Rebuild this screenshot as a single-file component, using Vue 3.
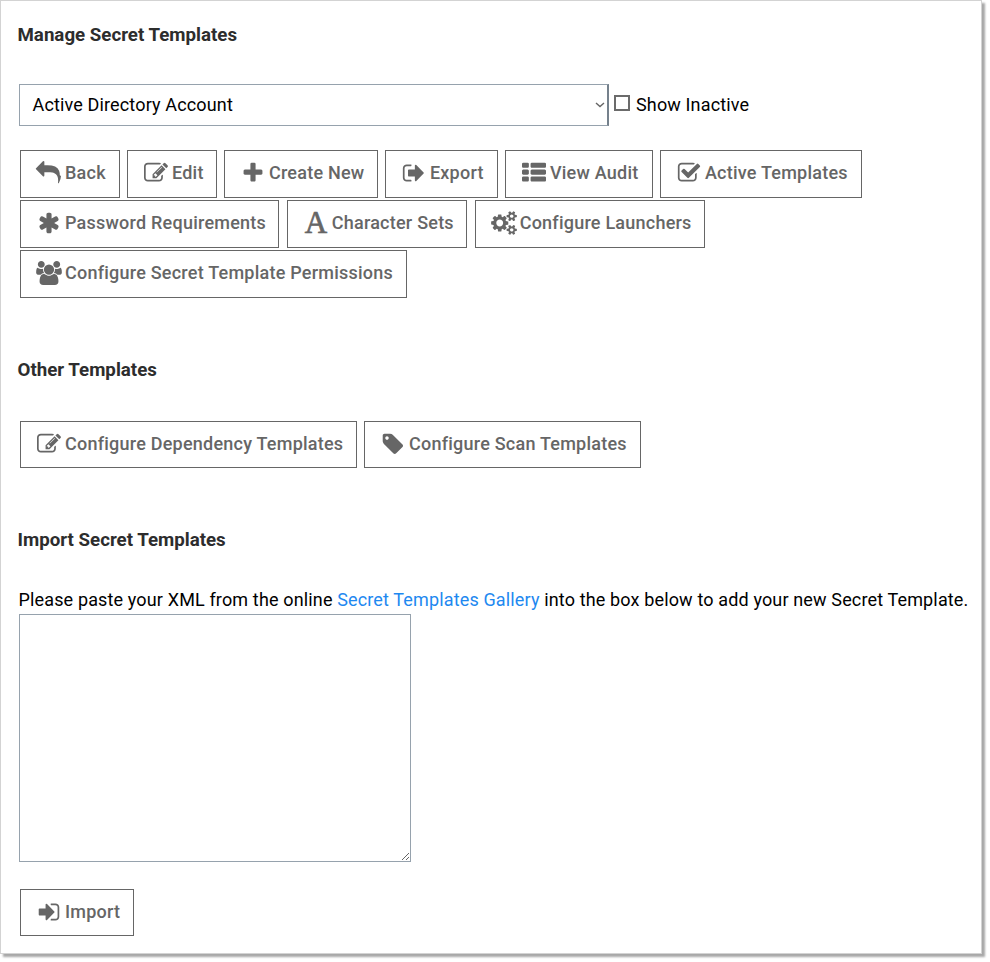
<script setup>
import { ref } from 'vue'

const inactive = ref(false)
const xml = ref('')

const listBar = (y) =>
  `M512 ${y}v192q0 40-28 68t-68 28h-320q-40 0-68-28t-28-68v-192q0-40 28-68t68-28h320q40 0 68 28t28 68z` +
  `M1792 ${y}v192q0 40-28 68t-68 28h-960q-40 0-68-28t-28-68v-192q0-40 28-68t68-28h960q40 0 68 28t28 68z`
const smallCog = (y) =>
  `M1920 ${y}v140q0 16-149 31-12 27-30 52 51 113 51 138 0 4-4 7-122 71-124 71-8 0-46-47t-52-68q-20 2-30 2t-30-2q-14 21-52 68t-46 47q-2 0-124-71-4-3-4-7 0-25 51-138-18-25-30-52-149-15-149-31v-140q0-16 149-31 13-29 30-52-51-113-51-138 0-4 4-7 4-2 35-20t59-34 30-16q8 0 46 46.5t52 67.5q20-2 30-2t30 2q51-71 92-112l6-2q4 0 124 70 4 3 4 7 0 25-51 138 17 23 30 52 149 15 149 31z`

const icons = {
  reply: 'M1792 1120q0 166-127 451-3 7-10.5 24t-13.5 30-13 22q-12 17-28 17-15 0-23.5-10t-8.5-25q0-9 2.5-26.5t2.5-23.5q5-68 5-123 0-112-19.5-200.5t-54-153.5-89-112-117.5-78-149.5-47.5-174-22.5-201-6.5h-224v256q0 26-19 45t-45 19-45-19l-512-512q-19-19-19-45t19-45l512-512q19-19 45-19t45 19 19 45v256h224q713 0 875 403 53 134 53 333z',
  edit: 'M888 1184l116-116-152-152-116 116v56h96v96h56zm440-720q-16-16-33 1l-350 350q-17 17-1 33t33-1l350-350q17-17 1-33zm80 594v190q0 119-84.5 203.5t-203.5 84.5h-832q-119 0-203.5-84.5t-84.5-203.5v-832q0-119 84.5-203.5t203.5-84.5h832q63 0 117 25 15 7 18 23 3 17-9 29l-49 49q-14 14-32 8-23-6-45-6h-832q-66 0-113 47t-47 113v832q0 66 47 113t113 47h832q66 0 113-47t47-113v-126q0-13 9-22l64-64q15-15 35-7t20 29zm-96-738l288 288-672 672h-288v-288zm444 132l-92 92-288-288 92-92q28-28 68-28t68 28l152 152q28 28 28 68t-28 68z',
  plus: 'M1600 736v192q0 40-28 68t-68 28h-416v416q0 40-28 68t-68 28h-192q-40 0-68-28t-28-68v-416h-416q-40 0-68-28t-28-68v-192q0-40 28-68t68-28h416v-416q0-40 28-68t68-28h192q40 0 68 28t28 68v416h416q40 0 68 28t28 68z',
  signOut: 'M704 1440q0 4 1 20t.5 26.5-3 23.5-10 19.5-20.5 6.5h-320q-119 0-203.5-84.5t-84.5-203.5v-704q0-119 84.5-203.5t203.5-84.5h320q13 0 22.5 9.5t9.5 22.5q0 4 1 20t.5 26.5-3 23.5-10 19.5-20.5 6.5h-320q-66 0-113 47t-47 113v704q0 66 47 113t113 47h312l11.5 1 11.5 3 8 5.5 7 9 2 13.5zm928-544q0 26-19 45l-544 544q-19 19-45 19t-45-19-19-45v-288h-448q-26 0-45-19t-19-45v-384q0-26 19-45t45-19h448v-288q0-26 19-45t45-19 45 19l544 544q19 19 19 45z',
  signIn: 'M1312 896q0 26-19 45l-544 544q-19 19-45 19t-45-19-19-45v-288h-448q-26 0-45-19t-19-45v-384q0-26 19-45t45-19h448v-288q0-26 19-45t45-19 45 19l544 544q19 19 19 45zm352-352v704q0 119-84.5 203.5t-203.5 84.5h-320q-13 0-22.5-9.5t-9.5-22.5q0-4-1-20t-.5-26.5 3-23.5 10-19.5 20.5-6.5h320q66 0 113-47t47-113v-704q0-66-47-113t-113-47h-312l-11.5-1-11.5-3-8-5.5-7-9-2-13.5q0-4-1-20t-.5-26.5 3-23.5 10-19.5 20.5-6.5h320q119 0 203.5 84.5t84.5 203.5z',
  list: listBar(224) + listBar(736) + listBar(1248),
  check: 'M1472 930v318q0 119-84.5 203.5t-203.5 84.5h-832q-119 0-203.5-84.5t-84.5-203.5v-832q0-119 84.5-203.5t203.5-84.5h832q63 0 117 25 15 7 18 23 3 17-9 29l-49 49q-10 10-23 10-3 0-9-2-23-6-45-6h-832q-66 0-113 47t-47 113v832q0 66 47 113t113 47h832q66 0 113-47t47-113v-254q0-13 9-22l64-64q10-10 23-10 6 0 12 3 20 8 20 29zm231-489l-814 814q-24 24-57 24t-57-24l-430-430q-24-24-24-57t24-57l110-110q24-24 57-24t57 24l263 263 647-647q24-24 57-24t57 24l110 110q24 24 24 57t-24 57z',
  asterisk: 'M1546 1050q46 26 59.5 77.5t-12.5 97.5l-64 110q-26 46-77.5 59.5t-97.5-12.5l-266-153v307q0 52-38 90t-90 38h-128q-52 0-90-38t-38-90v-307l-266 153q-46 26-97.5 12.5t-77.5-59.5l-64-110q-26-46-12.5-97.5t59.5-77.5l266-154-266-154q-46-26-59.5-77.5t12.5-97.5l64-110q26-46 77.5-59.5t97.5 12.5l266 153v-307q0-52 38-90t90-38h128q52 0 90 38t38 90v307l266-153q46-26 97.5-12.5t77.5 59.5l64 110q26 46 12.5 97.5t-59.5 77.5l-266 154z',
  cogs: 'M896 896q0-106-75-181t-181-75-181 75-75 181 75 181 181 75 181-75 75-181zm768 512q0-52-38-90t-90-38-90 38-38 90q0 53 37.5 90.5t90.5 37.5 90.5-37.5 37.5-90.5zm0-1024q0-52-38-90t-90-38-90 38-38 90q0 53 37.5 90.5t90.5 37.5 90.5-37.5 37.5-90.5zm-384 421v185q0 10-7 19.5t-16 10.5l-155 24q-11 35-32 76 34 48 90 115 7 11 7 20 0 12-7 19-23 30-82.5 89.5t-78.5 59.5q-11 0-21-7l-115-90q-37 19-77 31-11 108-23 155-7 24-30 24h-186q-11 0-20-7.5t-10-17.5l-23-153q-34-10-75-31l-118 89q-7 7-20 7-11 0-21-8-144-133-144-160 0-9 7-19 10-14 41-53t47-61q-23-44-35-82l-152-24q-10-1-17-9.5t-7-19.5v-185q0-10 7-19.5t16-10.5l155-24q11-35 32-76-34-48-90-115-7-11-7-20 0-12 7-20 22-30 82-89t79-59q11 0 21 7l115 90q34-18 77-32 11-108 23-154 7-24 30-24h186q11 0 20 7.5t10 17.5l23 153q34 10 75 31l118-89q8-7 20-7 11 0 21 8 144 133 144 160 0 8-7 19-12 16-42 54t-45 60q23 48 34 82l152 23q10 2 17 10.5t7 19.5z' + smallCog(1338) + smallCog(314),
  users: 'M593 896q-162 5-265 128h-134q-82 0-138-40.5t-56-118.5q0-353 124-353 6 0 43.5 21t97.5 42.5 119 21.5q67 0 133-23-5 37-5 66 0 139 81 256zm1071 637q0 120-73 189.5t-194 69.5h-874q-121 0-194-69.5t-73-189.5q0-53 3.5-103.5t14-109 26.5-108.5 43-97.5 62-81 85.5-53.5 111.5-20q10 0 43 21.5t73 48 107 48 135 21.5 135-21.5 107-48 73-48 43-21.5q61 0 111.5 20t85.5 53.5 62 81 43 97.5 26.5 108.5 14 109 3.5 103.5zm-1024-1277q0 106-75 181t-181 75-181-75-75-181 75-181 181-75 181 75 75 181zm704 384q0 159-112.5 271.5t-271.5 112.5-271.5-112.5-112.5-271.5 112.5-271.5 271.5-112.5 271.5 112.5 112.5 271.5zm576 225q0 78-56 118.5t-138 40.5h-134q-103-123-265-128 81-117 81-256 0-29-5-66 66 23 133 23 59 0 119-21.5t97.5-42.5 43.5-21q124 0 124 353zm-128-609q0 106-75 181t-181 75-181-75-75-181 75-181 181-75 181 75 75 181z',
  tag: 'M576 448q0-53-37.5-90.5t-90.5-37.5-90.5 37.5-37.5 90.5 37.5 90.5 90.5 37.5 90.5-37.5 37.5-90.5zm1067 576q0 53-37 90l-491 492q-39 37-91 37-53 0-90-37l-715-716q-38-37-64.5-101t-26.5-117v-416q0-52 38-90t90-38h416q53 0 117 26.5t102 64.5l715 714q37 39 37 91z',
}

const wide = ['cogs', 'users']
const viewBox = (name) => `${wide.includes(name) ? 64 : 0} 0 1792 1792`

const groups = {
  manage: [
    { icon: 'reply', label: 'Back', width: 99.6 },
    { icon: 'edit', label: 'Edit', width: 89.6 },
    { icon: 'plus', label: 'Create New', width: 153.6 },
    { icon: 'signOut', label: 'Export', width: 112.6 },
    { icon: 'list', label: 'View Audit', width: 147.6 },
    { icon: 'check', label: 'Active Templates', width: 201.6 },
    { icon: 'asterisk', label: 'Password Requirements', width: 259.4 },
    { icon: 'letter', label: 'Character Sets', width: 180.5 },
    { icon: 'cogs', label: 'Configure Launchers', width: 230 },
    { icon: 'users', label: 'Configure Secret Template Permissions', width: 387 },
  ],
  other: [
    { icon: 'edit', label: 'Configure Dependency Templates', width: 336.6 },
    { icon: 'tag', label: 'Configure Scan Templates', width: 277 },
  ],
  import: [{ icon: 'signIn', label: 'Import', width: 114 }],
}
</script>

<template>
  <div class="page">
    <main class="panel">
      <h2 class="title">Manage Secret Templates</h2>
      <div class="picker">
        <div class="select" role="combobox" tabindex="0">
          <span class="value">Active Directory Account</span>
          <svg class="chevron" viewBox="0 0 10 6"><path d="M1 1l4 3.6L9 1" /></svg>
        </div>
        <label class="toggle">
          <input v-model="inactive" type="checkbox" class="box" />
          <span class="value">Show Inactive</span>
        </label>
      </div>

      <template v-for="(buttons, key) in groups" :key="key">
        <h2 v-if="key === 'other'" class="title">Other Templates</h2>
        <template v-if="key === 'import'">
          <h2 class="title">Import Secret Templates</h2>
          <p class="hint">Please paste your XML from the online <a class="link">Secret Templates Gallery</a> into the box below to add your new Secret Template.</p>
          <textarea v-model="xml" class="xml"></textarea>
        </template>
        <div class="buttons" :class="key">
          <button v-for="b in buttons" :key="b.label" type="button" class="btn" :style="{ width: b.width + 'px' }">
            <span v-if="b.icon === 'letter'" class="icon letter">A</span>
            <svg v-else class="icon" :viewBox="viewBox(b.icon)"><path :d="icons[b.icon]" /></svg>
            <span class="label">{{ b.label }}</span>
          </button>
        </div>
      </template>
    </main>
  </div>
</template>

<style>
body {
  background: #fff;
}
</style>

<style scoped>
.page {
  box-sizing: border-box;
  height: 962px;
  overflow: hidden;
}
.panel {
  box-sizing: border-box;
  width: 982px;
  height: 954px;
  padding: 23px 0 0 16.5px;
  border: 1px solid #d3d3d3;
  background: #fff;
  box-shadow: 3px 3px 2px #a8a8a8;
  font-family: Roboto, "Liberation Sans", sans-serif;
  font-size: 18px;
  letter-spacing: 0.145px;
  color: #000;
}
.title {
  margin: 0;
  font-size: 18.72px;
  font-weight: 700;
  line-height: 22px;
  letter-spacing: 0;
  color: #2d2d2d;
}
.picker {
  display: flex;
  align-items: center;
  height: 42px;
  margin: 38px 0 24px 1.5px;
}
.select {
  box-sizing: border-box;
  display: flex;
  align-items: center;
  justify-content: space-between;
  width: 590px;
  height: 42px;
  padding: 0 2px 0 12.5px;
  border: 1px solid #96a2ad;
  border-right: 2px solid #75818c;
}
.value {
  padding-bottom: 2px;
}
.chevron {
  width: 10px;
  height: 6px;
  fill: none;
  stroke: #666;
  stroke-width: 1.4;
}
.toggle {
  display: flex;
  align-items: center;
  gap: 6px;
  margin-left: 5px;
}
.box {
  appearance: none;
  box-sizing: border-box;
  width: 16px;
  height: 16px;
  margin: 0 0 4px;
  border: 2px solid #6b6b6b;
  background: #fff;
}
.buttons {
  display: flex;
  flex-wrap: wrap;
  gap: 2px 7.4px;
  margin-left: 2.5px;
}
.btn {
  box-sizing: border-box;
  display: flex;
  flex: none;
  align-items: flex-start;
  height: 48px;
  padding: 10.5px 0 0 16.2px;
  border: 1px solid #666;
  background: #fff;
  color: #666;
  font: inherit;
  font-weight: 500;
  letter-spacing: 0.23px;
}
.icon {
  display: block;
  flex: none;
  width: 24px;
  height: 24px;
  margin-top: -0.5px;
  overflow: visible;
  fill: currentColor;
}
.letter {
  font-family: "Liberation Serif", serif;
  font-size: 31px;
  font-weight: 400;
  line-height: 24px;
  letter-spacing: 0;
  text-align: center;
  -webkit-text-stroke: 0.7px currentColor;
}
.label {
  margin-left: 3.8px;
  line-height: 22px;
  white-space: nowrap;
}
.manage {
  margin-bottom: 61px;
}
.other {
  margin: 40px 0 61px 2.5px;
}
.other .btn,
.import .btn {
  height: 47px;
}
.hint {
  margin: 38px 0 3px 1px;
  line-height: 22px;
  white-space: nowrap;
}
.link {
  color: #1e88f0;
}
.xml {
  box-sizing: border-box;
  display: block;
  width: 392px;
  height: 248px;
  margin: 0 0 27px 1.5px;
  border: 1px solid #96a2ad;
  background: #fff;
  resize: both;
}
</style>
